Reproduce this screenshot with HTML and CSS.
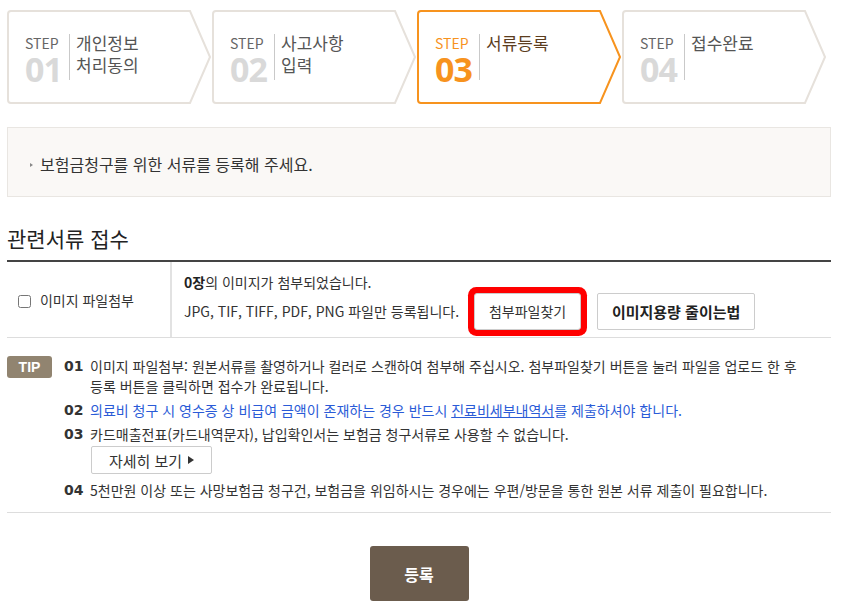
FILE: index.html
```html
<!DOCTYPE html>
<html lang="ko">
<head>
    <meta charset="UTF-8">
    <meta name="viewport" content="width=device-width, initial-scale=1.0">
    <title>보험금청구 - 서류등록</title>
    <link rel="stylesheet" href="styles.css">
</head>
<body>

    <div class="wrap">
        <!-- 단계 표시 -->
        <ol class="steps">
            <li class="step">
                <svg class="step-bg" viewBox="0 0 204 94"><path d="M4,1 H183 L203,47 L183,93 H4 Q1,93 1,90 V4 Q1,1 4,1 Z"/></svg>
                <div class="step-num"><span class="step-label">STEP</span><span class="step-digit">01</span></div>
                <div class="step-bar"></div>
                <div class="step-title">개인정보<br>처리동의</div>
            </li>
            <li class="step">
                <svg class="step-bg" viewBox="0 0 204 94"><path d="M4,1 H183 L203,47 L183,93 H4 Q1,93 1,90 V4 Q1,1 4,1 Z"/></svg>
                <div class="step-num"><span class="step-label">STEP</span><span class="step-digit">02</span></div>
                <div class="step-bar"></div>
                <div class="step-title">사고사항<br>입력</div>
            </li>
            <li class="step active">
                <svg class="step-bg" viewBox="0 0 204 94"><path d="M4,1 H183 L203,47 L183,93 H4 Q1,93 1,90 V4 Q1,1 4,1 Z"/></svg>
                <div class="step-num"><span class="step-label">STEP</span><span class="step-digit">03</span></div>
                <div class="step-bar"></div>
                <div class="step-title">서류등록</div>
            </li>
            <li class="step">
                <svg class="step-bg" viewBox="0 0 204 94"><path d="M4,1 H183 L203,47 L183,93 H4 Q1,93 1,90 V4 Q1,1 4,1 Z"/></svg>
                <div class="step-num"><span class="step-label">STEP</span><span class="step-digit">04</span></div>
                <div class="step-bar"></div>
                <div class="step-title">접수완료</div>
            </li>
        </ol>

        <div class="notice">
            <p><span class="bullet"></span>보험금청구를 위한 서류를 등록해 주세요.</p>
        </div>

        <h3 class="sec-title">관련서류 접수</h3>
        <div class="file-table">
            <div class="file-head">
                <label><input type="checkbox"> 이미지 파일첨부</label>
            </div>
            <div class="file-body">
                <p class="file-count"><b>0장</b>의 이미지가 첨부되었습니다.</p>
                <div class="file-row">
                    <span>JPG, TIF, TIFF, PDF, PNG 파일만 등록됩니다.</span>
                    <button class="btn btn-find">첨부파일찾기</button>
                    <button class="btn btn-bold">이미지용량 줄이는법</button>
                </div>
            </div>
        </div>

        <!-- TIP -->
        <div class="tip">
            <span class="tip-badge">TIP</span>
            <ol class="tip-list">
                <li><em>01</em><p>이미지 파일첨부: 원본서류를 촬영하거나 컬러로 스캔하여 첨부해 주십시오. 첨부파일찾기 버튼을 눌러 파일을 업로드 한 후 등록 버튼을 클릭하면 접수가 완료됩니다.</p></li>
                <li class="blue"><em>02</em><p>의료비 청구 시 영수증 상 비급여 금액이 존재하는 경우 반드시 <a href="#">진료비세부내역서</a>를 제출하셔야 합니다.</p></li>
                <li><em>03</em><p>카드매출전표(카드내역문자), 납입확인서는 보험금 청구서류로 사용할 수 없습니다.<br><button class="btn btn-more">자세히 보기 <span class="arr"></span></button></p></li>
                <li><em>04</em><p>5천만원 이상 또는 사망보험금 청구건, 보험금을 위임하시는 경우에는 우편/방문을 통한 원본 서류 제출이 필요합니다.</p></li>
            </ol>
        </div>

        <div class="btn-area">
            <button class="btn-submit">등록</button>
        </div>
    </div>

</body>
</html>
```

FILE: styles.css
```css
body {
    font-family: "Noto Sans CJK KR", "Noto Sans", sans-serif;
    color: #333;
    background: #fff;
    margin: 0;
    padding: 0;
}
p, ol, h3 {
    margin: 0;
    padding: 0;
}
ol {
    list-style: none;
}
.wrap {
    width: 824px;
    margin-left: 7px;
}

/* steps */
.steps {
    display: flex;
    gap: 1px;
    margin-top: 10px;
}
.step {
    position: relative;
    width: 204px;
    height: 94px;
    display: flex;
    align-items: flex-start;
    padding: 24px 0 0 18px;
    box-sizing: border-box;
}
.step-bg {
    position: absolute;
    left: 0;
    top: 0;
    width: 204px;
    height: 94px;
}
.step-bg path {
    fill: #fff;
    stroke: #e6e1db;
    stroke-width: 2;
}
.step.active .step-bg path {
    stroke: #f7931e;
}
.step-num, .step-bar, .step-title {
    position: relative;
}
.step-num {
    width: 44px;
    display: flex;
    flex-direction: column;
}
.step-label {
    font-size: 14px;
    line-height: 18px;
    color: #666;
}
.step-digit {
    font-family: "Noto Sans", sans-serif;
    font-size: 34px;
    font-weight: bold;
    line-height: 34px;
    color: #d9d9d9;
    letter-spacing: -1px;
}
.step-bar {
    width: 1px;
    height: 46px;
    background: #c9c9c9;
}
.step-title {
    font-size: 17px;
    line-height: 22px;
    color: #555;
    padding-left: 6px;
    margin-top: -2px;
}
.step.active .step-label,
.step.active .step-digit {
    color: #f7931e;
}
.step.active .step-title {
    color: #5c3d1e;
}

/* notice */
.notice {
    margin-top: 23px;
    background: #faf8f6;
    border: 1px solid #e9e6e2;
    padding: 26px 0 22px 22px;
}
.notice p {
    font-size: 16px;
    line-height: 20px;
    color: #333;
}
.bullet {
    display: inline-block;
    width: 0;
    height: 0;
    border-left: 3px solid #888;
    border-top: 2px solid transparent;
    border-bottom: 2px solid transparent;
    margin-right: 7px;
    vertical-align: 4px;
}

.sec-title {
    margin-top: 29px;
    margin-bottom: 10px;
    font-size: 21px;
    line-height: 24px;
    font-weight: normal;
    color: #222;
}

/* file table */
.file-table {
    display: flex;
    border-top: 2px solid #444;
    border-bottom: 1px solid #ddd;
    height: 75px;
}
.file-head {
    width: 156px;
    border-right: 2px solid #e2e2e2;
    display: flex;
    align-items: center;
    padding-left: 7px;
    font-size: 14px;
}
.file-head input {
    margin: 0 5px 0 4px;
    vertical-align: -2px;
}
.file-body {
    padding: 10px 0 0 12px;
    font-size: 14px;
}
.file-count {
    line-height: 20px;
}
.file-count b {
    color: #222;
}
.file-row {
    display: flex;
    align-items: center;
    height: 38px;
}
.btn {
    font-family: inherit;
    background: #fff;
    border: 1px solid #ccc;
    border-radius: 2px;
    color: #333;
    cursor: pointer;
}
.btn-find {
    width: 107px;
    height: 37px;
    margin-left: 15px;
    font-size: 14px;
    box-shadow: 0 0 0 6px #ff0000;
    border-radius: 3px;
}
.btn-bold {
    width: 158px;
    height: 37px;
    margin-left: 16px;
    font-size: 15px;
    font-weight: bold;
    color: #222;
}

/* tip */
.tip {
    display: flex;
    align-items: flex-start;
    padding: 18px 0 12px 0;
    border-bottom: 1px solid #ddd;
}
.tip-badge {
    width: 45px;
    height: 22px;
    line-height: 22px;
    border-radius: 3px;
    background: #918470;
    color: #fff;
    font-family: "Liberation Sans", Arial, sans-serif;
    font-weight: bold;
    font-size: 14px;
    text-align: center;
    margin-right: 12px;
}
.tip-list {
    flex: 1;
}
.tip-list li {
    display: flex;
    font-size: 14px;
    line-height: 20px;
    margin-top: 4px;
}
.tip-list li:first-child {
    margin-top: 0;
}
.tip-list em {
    font-style: normal;
    font-family: "DejaVu Sans", Verdana, sans-serif;
    font-weight: bold;
    font-size: 14px;
    width: 26px;
    flex-shrink: 0;
    color: #333;
}
.tip-list p {
    width: 720px;
}
.tip-list li.blue p,
.tip-list li.blue a {
    color: #2a5bd7;
}
.btn-more {
    width: 121px;
    height: 28px;
    margin: 2px 0 2px 1px;
    font-size: 15px;
    display: flex;
    align-items: center;
    justify-content: center;
    gap: 6px;
}
.arr {
    display: inline-block;
    width: 0;
    height: 0;
    border-left: 6px solid #333;
    border-top: 4px solid transparent;
    border-bottom: 4px solid transparent;
}

.btn-area {
    display: flex;
    justify-content: center;
    padding-top: 33px;
}
.btn-submit {
    width: 99px;
    height: 55px;
    border: none;
    border-radius: 3px;
    background: #6b5c4d;
    color: #fff;
    font-family: inherit;
    font-size: 16px;
    font-weight: bold;
}
```
